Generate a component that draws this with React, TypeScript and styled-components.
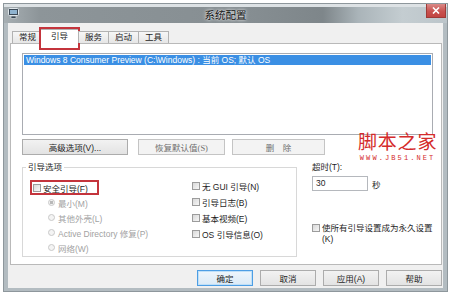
import React from "react";
import styled, { createGlobalStyle, css } from "styled-components";

const GlobalStyle = createGlobalStyle`
  html, body {
    margin: 0;
    padding: 0;
    background: #fff;
  }
  body {
    font-family: "Liberation Sans", "Noto Sans CJK SC", sans-serif;
    font-size: 8.5px;
    color: #1e1e1e;
  }
  * {
    box-sizing: border-box;
  }
`;

const markBox = css`
  &::after {
    content: "";
    position: absolute;
    border: 2px solid #c4343c;
    pointer-events: none;
  }
`;

const Page = styled.div`
  position: relative;
  width: 450px;
  height: 295px;
  padding: 3px 2px 3px 3px;
  background: #fff;
  overflow: hidden;
`;

const Window = styled.div`
  height: 100%;
  display: flex;
  flex-direction: column;
  border: 1px solid #8e979c;
  background: #b3bcc1;
`;

const TitleBar = styled.div`
  height: 19px;
  display: grid;
  grid-template-columns: 1fr auto 1fr;
  align-items: center;
  background: linear-gradient(90deg, #a7afb3 0%, #8d9599 8%, #868e92 55%, #7e868a 72%, #aab4b9 80%, #c4cdd1 90%, #bcc5ca 100%);
  box-shadow: inset 0 3px 0 #dde2e5;
`;

const AppIcon = styled.svg`
  align-self: start;
  margin: 4px 0 0 4px;
`;

const Title = styled.div`
  font-family: "Noto Sans CJK SC", sans-serif;
  font-size: 10.5px;
  color: #111;
  padding-top: 2px;
  text-shadow: 0 0 4px rgba(255, 255, 255, 0.8), 0 0 2px rgba(255, 255, 255, 0.9);
`;

const CloseButton = styled.div`
  justify-self: end;
  align-self: start;
  width: 20px;
  height: 14px;
  margin-right: 1px;
  display: flex;
  align-items: center;
  justify-content: center;
  background: linear-gradient(#d98a88, #c9524f 55%, #c24441);
  border: 1px solid #9e3a37;
  border-top: none;
`;

const Client = styled.div`
  flex: 1;
  margin: 0 4px 3px 4px;
  background: #f0f0f0;
  display: flex;
  flex-direction: column;
  padding: 8px 1px 0 2px;
`;

const TabStrip = styled.div`
  height: 12px;
  display: flex;
  align-items: flex-end;
  padding-left: 2px;
  position: relative;
  z-index: 1;
`;

const Tab = styled.div<{ $active?: boolean }>`
  position: relative;
  height: 12px;
  padding: 0 6px;
  margin-right: -1px;
  display: flex;
  align-items: center;
  border: 1px solid #b2b2b2;
  border-bottom: none;
  background: linear-gradient(#f6f6f6, #e6e6e6);
  line-height: 11px;
  ${({ $active }) =>
    $active &&
    css`
      height: 15px;
      margin: 0 -1px -1px -2px;
      padding: 0 10px 2px 10px;
      background: #fff;
      ${markBox};
      &::after {
        top: -3px;
        left: -2px;
        right: -2px;
        bottom: -6px;
      }
    `}
`;

const Panel = styled.div`
  flex: 1;
  display: flex;
  flex-direction: column;
  border: 1px solid #b9b9b9;
  background: #fff;
  padding: 9px 8px 0 11px;
`;

const ListBox = styled.div`
  height: 82px;
  border: 1px solid #a9acb2;
  padding: 1px;
  background: #fff;
`;

const SelectedEntry = styled.div`
  height: 10px;
  line-height: 10px;
  padding-left: 2px;
  background: #3b8fe4;
  color: #fff;
  white-space: nowrap;
`;

const ButtonBar = styled.div`
  display: flex;
  margin-top: 4px;
`;

const Button = styled.div<{ $width: number; $gap?: number; $disabled?: boolean; $default?: boolean }>`
  width: ${({ $width }) => $width}px;
  height: 16px;
  margin-left: ${({ $gap }) => $gap ?? 0}px;
  display: flex;
  align-items: center;
  justify-content: center;
  border: 1px solid #acacac;
  background: linear-gradient(#f2f2f2, #e3e3e3);
  color: #1e1e1e;
  white-space: pre;
  ${({ $disabled }) =>
    $disabled &&
    css`
      border-color: #c4c4c4;
      background: #f3f3f3;
      color: #6f6f6f;
      font-family: "Liberation Serif", "Noto Sans CJK SC", serif;
    `}
  ${({ $default }) =>
    $default &&
    css`
      border-color: #4d9ee4;
      box-shadow: inset 0 0 0 1px #bfe0f8;
      background: linear-gradient(#eef6fc, #dbeaf6);
    `}
`;

const OptionsArea = styled.div`
  display: flex;
  margin-top: 7px;
  gap: 15px;
`;

const GroupBox = styled.fieldset`
  width: 275px;
  height: 95px;
  margin: 0;
  padding: 5px 0 0 0;
  border: 1px solid #d8d8d8;
`;

const GroupLegend = styled.legend`
  margin-left: 3px;
  padding: 0 2px;
  line-height: 11px;
`;

const GroupBody = styled.div`
  display: grid;
  grid-template-columns: 159px 1fr;
  padding-left: 10px;
`;

const Column = styled.div<{ $offset?: number }>`
  display: flex;
  flex-direction: column;
  margin-top: ${({ $offset }) => $offset ?? 0}px;
`;

const OptionRow = styled.div<{ $height: number; $indent?: number; $muted?: boolean; $marked?: boolean }>`
  position: relative;
  height: ${({ $height }) => $height}px;
  padding-left: ${({ $indent }) => $indent ?? 0}px;
  display: flex;
  align-items: center;
  gap: 2px;
  white-space: nowrap;
  color: ${({ $muted }) => ($muted ? "#a2a2a2" : "#1e1e1e")};
  ${({ $marked }) =>
    $marked &&
    css`
      ${markBox};
      &::after {
        top: 0;
        bottom: 0;
        left: -3px;
        width: 65px;
      }
    `}
`;

const CheckBox = styled.span`
  flex: none;
  width: 8px;
  height: 8px;
  border: 1px solid #9c9c9c;
  background: linear-gradient(135deg, #d9d9d9, #f7f7f7);
`;

const Radio = styled.span<{ $checked?: boolean }>`
  flex: none;
  width: 7px;
  height: 7px;
  margin-right: 1px;
  border-radius: 50%;
  border: 1px solid #c9c9c9;
  background: ${({ $checked }) =>
    $checked ? "radial-gradient(circle, #b9b9b9 0 1.6px, #f2f2f2 2px)" : "#f4f4f4"};
`;

const SidePane = styled.div`
  flex: 1;
  display: flex;
  flex-direction: column;
`;

const FieldLabel = styled.div`
  line-height: 11px;
`;

const TimeoutRow = styled.div`
  display: flex;
  align-items: center;
  gap: 4px;
  margin-top: 3px;
`;

const TextBox = styled.div`
  width: 56px;
  height: 15px;
  border: 1px solid #b5b8bd;
  background: #fff;
  padding-left: 3px;
  line-height: 13px;
`;

const PermanentRow = styled.div`
  display: flex;
  align-items: flex-start;
  gap: 2px;
  margin-top: 32px;
  line-height: 11px;
  & > span:first-child {
    margin-top: 1px;
  }
`;

const Footer = styled.div`
  height: 23px;
  display: flex;
  justify-content: flex-end;
  align-items: flex-start;
  padding-top: 5px;
  gap: 7px;
`;

const Watermark = styled.div`
  position: absolute;
  left: 358px;
  top: 128px;
  color: #d42b2b;
  text-align: center;
`;

const WatermarkName = styled.div`
  font-family: "Noto Sans CJK SC", sans-serif;
  font-size: 19px;
  line-height: 26px;
  letter-spacing: 0.8px;
`;

const WatermarkUrl = styled.div`
  font-family: "Liberation Mono", monospace;
  font-size: 7px;
  line-height: 8px;
  letter-spacing: 2.1px;
`;

const tabs = ["常规", "引导", "服务", "启动", "工具"];

const App = () => {
  return (
    <Page>
      <GlobalStyle />
      <Window>
        <TitleBar>
          <AppIcon width="11" height="11" viewBox="0 0 11 11">
            <rect x="0.5" y="0.5" width="10" height="7" rx="1" fill="#3c4a57" stroke="#dfe6ea" />
            <rect x="2" y="2" width="7" height="4" fill="#8fb3cf" />
            <rect x="3" y="8" width="5" height="2.5" fill="#3c4a57" stroke="#dfe6ea" strokeWidth="0.6" />
          </AppIcon>
          <Title>系统配置</Title>
          <CloseButton>
            <svg width="8" height="7" viewBox="0 0 8 7">
              <path d="M1 0.5 L7 6.5 M7 0.5 L1 6.5" stroke="#fff" strokeWidth="1.6" />
            </svg>
          </CloseButton>
        </TitleBar>
        <Client>
          <TabStrip>
            {tabs.map((t) => (
              <Tab key={t} $active={t === "引导"}>
                {t}
              </Tab>
            ))}
          </TabStrip>
          <Panel>
            <ListBox>
              <SelectedEntry>Windows 8 Consumer Preview (C:\Windows) : 当前 OS; 默认 OS</SelectedEntry>
            </ListBox>
            <ButtonBar>
              <Button $width={106}>高级选项(V)...</Button>
              <Button $width={87} $gap={10} $disabled>
                恢复默认值(S)
              </Button>
              <Button $width={93} $gap={7} $disabled>
                删    除
              </Button>
            </ButtonBar>
            <OptionsArea>
              <GroupBox>
                <GroupLegend>引导选项</GroupLegend>
                <GroupBody>
                  <Column $offset={2}>
                    <OptionRow $height={15} $marked>
                      <CheckBox />
                      安全引导(F)
                    </OptionRow>
                    <OptionRow $height={15} $indent={15} $muted>
                      <Radio $checked />
                      最小(M)
                    </OptionRow>
                    <OptionRow $height={15} $indent={15} $muted>
                      <Radio />
                      其他外壳(L)
                    </OptionRow>
                    <OptionRow $height={15} $indent={15} $muted>
                      <Radio />
                      Active Directory 修复(P)
                    </OptionRow>
                    <OptionRow $height={15} $indent={15} $muted>
                      <Radio />
                      网络(W)
                    </OptionRow>
                  </Column>
                  <Column>
                    <OptionRow $height={16}>
                      <CheckBox />
                      无 GUI 引导(N)
                    </OptionRow>
                    <OptionRow $height={16}>
                      <CheckBox />
                      引导日志(B)
                    </OptionRow>
                    <OptionRow $height={16}>
                      <CheckBox />
                      基本视频(E)
                    </OptionRow>
                    <OptionRow $height={16}>
                      <CheckBox />
                      OS 引导信息(O)
                    </OptionRow>
                  </Column>
                </GroupBody>
              </GroupBox>
              <SidePane>
                <FieldLabel>超时(T):</FieldLabel>
                <TimeoutRow>
                  <TextBox>30</TextBox>
                  秒
                </TimeoutRow>
                <PermanentRow>
                  <CheckBox />
                  <span>
                    使所有引导设置成为永久设置
                    <br />
                    (K)
                  </span>
                </PermanentRow>
              </SidePane>
            </OptionsArea>
          </Panel>
          <Footer>
            <Button $width={56} $default>
              确定
            </Button>
            <Button $width={56}>取消</Button>
            <Button $width={56}>应用(A)</Button>
            <Button $width={56}>帮助</Button>
          </Footer>
        </Client>
      </Window>
      <Watermark>
        <WatermarkName>脚本之家</WatermarkName>
        <WatermarkUrl>WWW.JB51.NET</WatermarkUrl>
      </Watermark>
    </Page>
  );
};

export default App;
